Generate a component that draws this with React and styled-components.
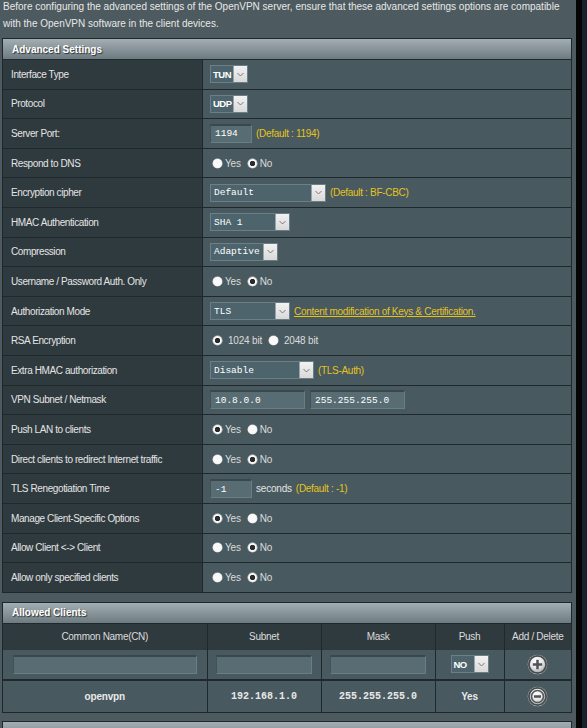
import React from "react";
import styled, { createGlobalStyle } from "styled-components";

const Global = createGlobalStyle`
  html, body { margin: 0; padding: 0; background: #4d5a5f; }
  body { font-family: "Liberation Sans", Arial, sans-serif; font-size: 10px; color: #e6e6e6; overflow: hidden; }
`;

const MONO = '"Liberation Mono", "DejaVu Sans Mono", monospace';

const Page = styled.div`
  display: flex;
  min-height: 100vh;
  width: 587px;
`;

const Main = styled.div`
  width: 576px;
  flex: none;
`;

const Strip = styled.div`
  width: 11px;
  flex: none;
  background: linear-gradient(to right, #050505 0 6px, #17232b 6px);
`;

const Intro = styled.p`
  margin: -2px 0 6px 3px;
  width: 565px;
  font-size: 10px;
  line-height: 17px;
  color: #e8e8e8;
`;

const Panel = styled.div`
  margin-left: 2px;
  width: 570px;
  box-sizing: border-box;
  border: 1px solid #1e272b;
  margin-bottom: ${(p) => p.$gap || 0}px;
`;

const PanelHeader = styled.div`
  height: 20px;
  display: flex;
  align-items: center;
  padding-left: 9px;
  background: linear-gradient(to bottom, #a3aeb2, #6d7b81);
  color: #fff;
  font-weight: bold;
  font-size: 10px;
  text-shadow: 1px 1px 1px #2b3438;
`;

const Row = styled.div`
  display: grid;
  grid-template-columns: 200px 1fr;
  height: 28.6px;
  border-top: 1px solid #1f292d;
`;

const Label = styled.div`
  display: flex;
  align-items: center;
  padding-left: 8px;
  background: #2f3a3f;
  border-right: 1px solid #1f292d;
  color: #e4e4e4;
  font-size: 10px;
  letter-spacing: -0.4px;
`;

const Value = styled.div`
  display: flex;
  align-items: center;
  gap: ${(p) => p.$gap ?? 4}px;
  padding-left: 7px;
  background: #485a60;
  color: #e4e4e4;
`;

const SelectBox = styled.div`
  display: inline-flex;
  align-items: stretch;
  width: ${(p) => p.$w}px;
  height: 18px;
  box-sizing: border-box;
  border: 1px solid #6c7f86;
  background: #4d646c;
  flex: none;
`;

const SelectText = styled.span`
  flex: 1;
  display: flex;
  align-items: center;
  padding-left: ${(p) => (p.$mono ? 3 : 2)}px;
  color: #fff;
  font-family: ${(p) => (p.$mono ? MONO : '"Liberation Sans", Arial, sans-serif')};
  font-weight: ${(p) => (p.$mono ? "normal" : "bold")};
  font-size: ${(p) => (p.$mono ? 9.5 : 9.5)}px;
  letter-spacing: ${(p) => (p.$mono ? 0 : -0.5)}px;
  white-space: nowrap;
  overflow: visible;
  min-width: 0;
`;

const Arrow = styled.span`
  width: 13px;
  flex: none;
  display: flex;
  align-items: center;
  justify-content: center;
  background: linear-gradient(to bottom, #f2f2f2, #d9d9d9);
  border-left: 1px solid #9aa4a8;
`;

const Select = ({ value, w, mono }) => (
  <SelectBox $w={w}>
    <SelectText $mono={mono}>{value}</SelectText>
    <Arrow>
      <svg width="7" height="5" viewBox="0 0 7 5">
        <path d="M0.5 1 L3.5 4 L6.5 1" fill="none" stroke="#7a7a7a" strokeWidth="1" />
      </svg>
    </Arrow>
  </SelectBox>
);

const TextInput = styled.div`
  width: ${(p) => p.$w}px;
  height: 19px;
  box-sizing: border-box;
  flex: none;
  display: flex;
  align-items: center;
  padding-left: 4px;
  background: #586d73;
  border-top: 2px solid #3a474b;
  border-left: 1px solid #435257;
  border-right: 1px solid #6a7d83;
  border-bottom: 1px solid #6a7d83;
  color: #fff;
  font-family: ${MONO};
  font-size: 9.5px;
`;

const Hint = styled.span`
  color: #e6c21c;
  font-size: 10px;
  letter-spacing: -0.3px;
`;

const HintLink = styled.a`
  color: #e6c21c;
  font-size: 10px;
  letter-spacing: -0.3px;
  text-decoration: underline;
  cursor: pointer;
`;

const Plain = styled.span`
  color: #e4e4e4;
  font-size: 10px;
  letter-spacing: -0.2px;
`;

const RadioGroup = styled.label`
  display: inline-flex;
  align-items: center;
  gap: ${(p) => p.$gap || 3}px;
  margin-left: ${(p) => (p.$first ? 3 : 2)}px;
  margin-right: 1px;
  color: #dcdcdc;
  font-size: 10px;
  letter-spacing: -0.2px;
`;

const RadioDot = styled.span`
  width: 9px;
  height: 9px;
  border-radius: 50%;
  flex: none;
  background: ${(p) =>
    p.$on ? "radial-gradient(circle, #2b2b2b 0 2.4px, #fafafa 3px)" : "#fafafa"};
  box-shadow: 0 0 0 0.5px #d0d0d0;
`;

const Radio = ({ on, label, gap, first }) => (
  <RadioGroup $gap={gap} $first={first}>
    <RadioDot $on={on} />
    {label}
  </RadioGroup>
);

const YesNo = ({ yes }) => (
  <>
    <Radio on={yes} label="Yes" first />
    <Radio on={!yes} label="No" />
  </>
);

const rows = [
  { label: "Interface Type", content: <Select value="TUN" w={38} /> },
  { label: "Protocol", content: <Select value="UDP" w={38} /> },
  {
    label: "Server Port:",
    content: (
      <>
        <TextInput $w={42}>1194</TextInput>
        <Hint>(Default : 1194)</Hint>
      </>
    ),
  },
  { label: "Respond to DNS", content: <YesNo yes={false} /> },
  {
    label: "Encryption cipher",
    content: (
      <>
        <Select value="Default" w={116} mono />
        <Hint>(Default : BF-CBC)</Hint>
      </>
    ),
  },
  { label: "HMAC Authentication", content: <Select value="SHA 1" w={80} mono /> },
  { label: "Compression", content: <Select value="Adaptive" w={68} mono /> },
  { label: "Username / Password Auth. Only", content: <YesNo yes={false} /> },
  {
    label: "Authorization Mode",
    content: (
      <>
        <Select value="TLS" w={80} mono />
        <HintLink>Content modification of Keys &amp; Certification.</HintLink>
      </>
    ),
  },
  {
    label: "RSA Encryption",
    content: (
      <>
        <Radio on label="1024 bit" gap={6} first />
        <Radio on={false} label="2048 bit" gap={6} />
      </>
    ),
  },
  {
    label: "Extra HMAC authorization",
    content: (
      <>
        <Select value="Disable" w={104} mono />
        <Hint>(TLS-Auth)</Hint>
      </>
    ),
  },
  {
    label: "VPN Subnet / Netmask",
    gap: 5,
    content: (
      <>
        <TextInput $w={95}>10.8.0.0</TextInput>
        <TextInput $w={95}>255.255.255.0</TextInput>
      </>
    ),
  },
  { label: "Push LAN to clients", content: <YesNo yes /> },
  { label: "Direct clients to redirect Internet traffic", content: <YesNo yes={false} /> },
  {
    label: "TLS Renegotiation Time",
    content: (
      <>
        <TextInput $w={42}>-1</TextInput>
        <Plain>seconds</Plain>
        <Hint>(Default : -1)</Hint>
      </>
    ),
  },
  { label: "Manage Client-Specific Options", content: <YesNo yes /> },
  { label: "Allow Client <-> Client", content: <YesNo yes={false} /> },
  { label: "Allow only specified clients", content: <YesNo yes={false} /> },
];

const Table = styled.table`
  width: 100%;
  border-collapse: collapse;
  table-layout: fixed;
`;

const Th = styled.th`
  height: 26px;
  background: #2f3a3f;
  color: #dcdcdc;
  font-weight: normal;
  font-size: 10px;
  letter-spacing: -0.3px;
  text-align: center;
  border-top: 1px solid #1f292d;
  border-right: 1px solid #1f292d;
  padding: 0;
  &:last-child { border-right: none; }
`;

const Td = styled.td`
  height: ${(p) => p.$h}px;
  background: #485a60;
  text-align: center;
  padding: 0;
  border-right: 1px solid #1f292d;
  border-bottom: ${(p) => p.$bb || 0}px solid #1f292d;
  color: #e8e8e8;
  font-family: ${(p) => (p.$mono ? MONO : '"Liberation Sans", Arial, sans-serif')};
  font-weight: bold;
  font-size: 10px;
  letter-spacing: ${(p) => (p.$mono ? 0 : -0.2)}px;
  vertical-align: middle;
  &:last-child { border-right: none; }
`;

const CellInner = styled.div`
  display: flex;
  justify-content: center;
  align-items: center;
`;

const RoundButton = ({ minus }) => {
  const id = minus ? "gm" : "gp";
  return (
    <svg width="21" height="21" viewBox="0 0 21 21">
      <defs>
        <radialGradient id={id} cx="42%" cy="32%" r="70%">
          <stop offset="0" stopColor="#ffffff" />
          <stop offset="0.55" stopColor="#e6e6e6" />
          <stop offset="1" stopColor="#a5a5a5" />
        </radialGradient>
      </defs>
      <circle cx="10.5" cy="10.5" r="9.8" fill="#bfc3c4" />
      <circle cx="10.5" cy="10.5" r="8.6" fill={`url(#${id})`} stroke="#474c4e" strokeWidth="1.8" />
      {minus && <circle cx="10.5" cy="10.5" r="6" fill="none" stroke="#555b5e" strokeWidth="1.7" />}
      <rect x={minus ? 7 : 5.8} y="9.25" width={minus ? 7 : 9.4} height="2.5" fill="#4f5457" />
      {!minus && <rect x="9.25" y="5.8" width="2.5" height="9.4" fill="#4f5457" />}
    </svg>
  );
};

export default function App() {
  return (
    <>
      <Global />
      <Page>
        <Main>
          <Intro>
            Before configuring the advanced settings of the OpenVPN server, ensure that these advanced settings options are compatible with the OpenVPN software in the client devices.
          </Intro>
          <Panel $gap={9}>
            <PanelHeader>Advanced Settings</PanelHeader>
            {rows.map((r) => (
              <Row key={r.label}>
                <Label>{r.label}</Label>
                <Value $gap={r.gap}>{r.content}</Value>
              </Row>
            ))}
          </Panel>
          <Panel $gap={8}>
            <PanelHeader>Allowed Clients</PanelHeader>
            <Table>
              <colgroup>
                <col style={{ width: 204 }} />
                <col style={{ width: 114 }} />
                <col style={{ width: 114 }} />
                <col style={{ width: 69 }} />
                <col />
              </colgroup>
              <thead>
                <tr>
                  <Th>Common Name(CN)</Th>
                  <Th>Subnet</Th>
                  <Th>Mask</Th>
                  <Th>Push</Th>
                  <Th>Add / Delete</Th>
                </tr>
              </thead>
              <tbody>
                <tr>
                  <Td $h={29} $bb={2}>
                    <CellInner><TextInput $w={184} /></CellInner>
                  </Td>
                  <Td $h={29} $bb={2}>
                    <CellInner><TextInput $w={96} /></CellInner>
                  </Td>
                  <Td $h={29} $bb={2}>
                    <CellInner><TextInput $w={96} /></CellInner>
                  </Td>
                  <Td $h={29} $bb={2}>
                    <CellInner><Select value="NO" w={38} /></CellInner>
                  </Td>
                  <Td $h={29} $bb={2}>
                    <CellInner><RoundButton /></CellInner>
                  </Td>
                </tr>
                <tr>
                  <Td $h={31}>openvpn</Td>
                  <Td $h={31} $mono>192.168.1.0</Td>
                  <Td $h={31} $mono>255.255.255.0</Td>
                  <Td $h={31}>Yes</Td>
                  <Td $h={31}>
                    <CellInner><RoundButton minus /></CellInner>
                  </Td>
                </tr>
              </tbody>
            </Table>
          </Panel>
          <Panel>
            <PanelHeader>&nbsp;</PanelHeader>
          </Panel>
        </Main>
        <Strip />
      </Page>
    </>
  );
}
